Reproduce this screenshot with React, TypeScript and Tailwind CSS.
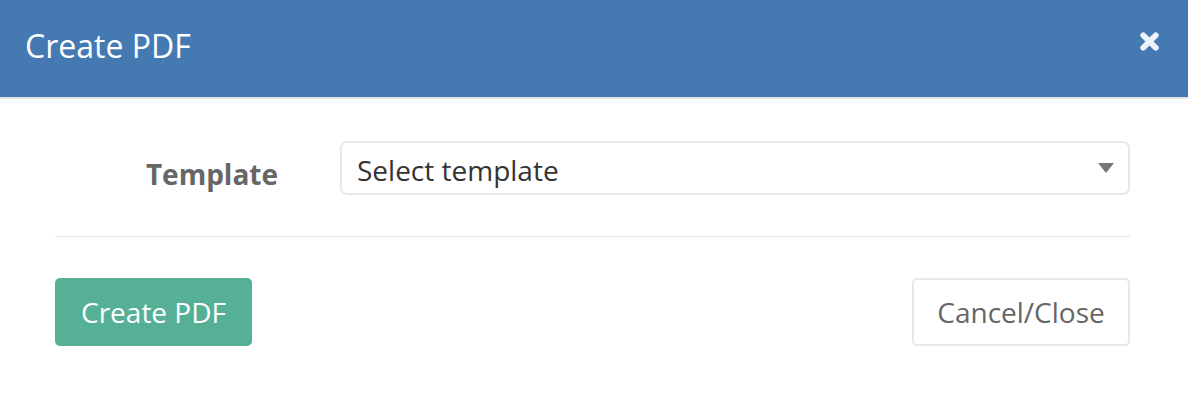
import React from "react";

export default function App() {
  return (
    <div className="w-[1188px] h-[406px] bg-white" style={{ fontFamily: '"Open Sans", sans-serif' }}>
      <div className="h-[99px] bg-[#4479b2] border-b-2 border-[#e3e3e3] flex items-center justify-between pl-[25px] pr-[28px]">
        <h1 className="text-[32px] text-white leading-none font-normal pb-[5px]">Create PDF</h1>
        <svg width="21" height="21" viewBox="0 0 20 20" className="mb-[15px]">
          <path d="M4 4 L16 16 M16 4 L4 16" stroke="#eef3f9" strokeWidth="5.5" strokeLinecap="round" />
        </svg>
      </div>
      <div className="pl-[55px] pr-[58px]">
        <div className="flex items-center pt-[42px]">
          <label className="w-[223px] text-right text-[28px] font-bold text-[#666] pt-[12px]">Template</label>
          <div className="ml-[62px] flex-1 h-[54px] border-2 border-[#e8e8e8] rounded-[7px] flex items-center justify-between pl-[15px] pr-[14px]">
            <span className="text-[28px] text-[#333] leading-none pt-[4px]">Select template</span>
            <svg width="16" height="10" viewBox="0 0 16 10">
              <path d="M0 0 L16 0 L8 10 Z" fill="#777" />
            </svg>
          </div>
        </div>
        <div className="mt-[41px] h-px bg-[#e5e5e5]" />
        <div className="mt-[41px] flex justify-between">
          <button className="w-[197px] h-[68px] bg-[#55b096] rounded-[5px] text-white text-[28px]">Create PDF</button>
          <button className="w-[218px] h-[68px] border-2 border-[#e8e8e8] rounded-[5px] text-[#666] text-[28px]">Cancel/Close</button>
        </div>
      </div>
    </div>
  );
}
